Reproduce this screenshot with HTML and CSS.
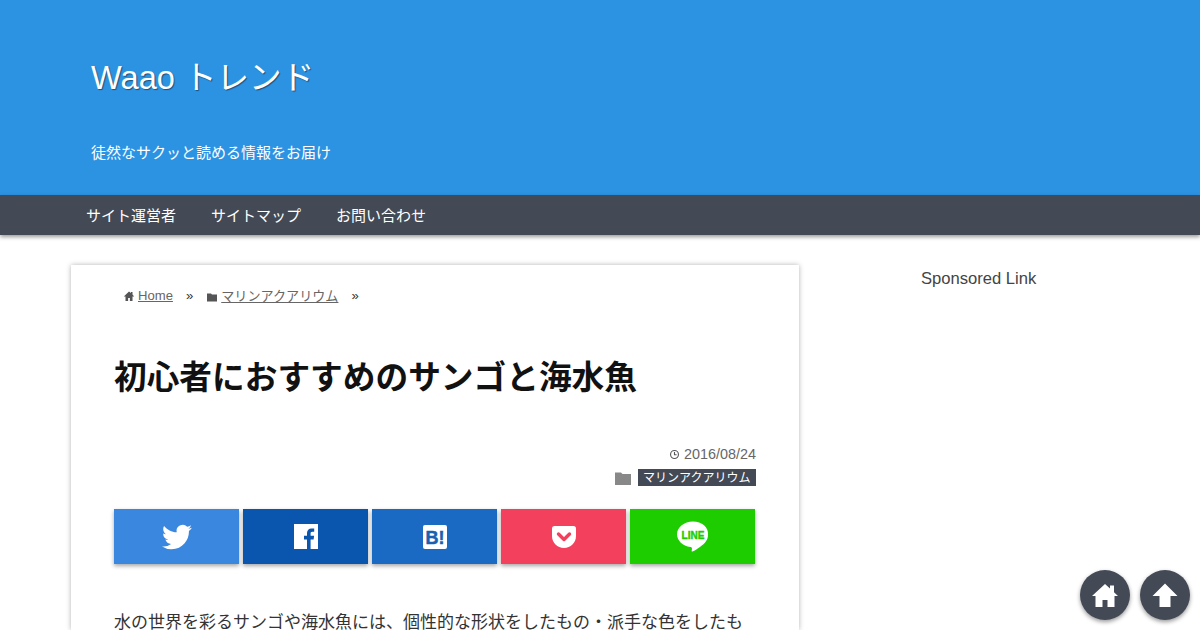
FILE: index.html
```html
<!DOCTYPE html>
<html lang="ja">
<head>
  <meta charset="UTF-8">
  <meta name="viewport" content="width=device-width, initial-scale=1.0">
  <title>初心者におすすめのサンゴと海水魚</title>
  <link rel="stylesheet" href="styles.css">
</head>
<body>
  <header class="site-header">
    <div class="site-title">Waao トレンド</div>
    <div class="site-desc">徒然なサクッと読める情報をお届け</div>
  </header>

  <nav class="nav-bar">
    <a href="#">サイト運営者</a>
    <a href="#">サイトマップ</a>
    <a href="#">お問い合わせ</a>
  </nav>

  <div class="body-wrap">
    <main class="post-card">
      <div class="crumbs">
        <a href="#"><svg class="crumb-icon" viewBox="0 0 12 12"><path d="M6 1.500 .8 6.400h1.700V11h2.600V8h1.800v3h2.600V6.400h1.700L9.500 4.500V2H8v1.100z"/></svg>Home</a>
        <span class="crumb-sep">»</span>
        <a href="#"><svg class="crumb-icon" viewBox="0 0 12 12"><path d="M1 2.500h4l1 1h5v7H1z"/></svg>マリンアクアリウム</a>
        <span class="crumb-sep">»</span>
      </div>

      <h1 class="post-title">初心者におすすめのサンゴと海水魚</h1>

      <div class="post-meta">
        <div class="post-date"><svg class="clock-icon" viewBox="0 0 12 12"><circle cx="6" cy="6" r="4.300"/><path d="M6 3.300v3h2.300"/></svg>2016/08/24</div>
        <div class="post-cat">
          <svg class="cat-icon" viewBox="0 0 16 14"><path d="M0 1.500h6L7.500 3H16v11H0z"/></svg>
          <a class="cat-tag" href="#">マリンアクアリウム</a>
        </div>
      </div>

      <div class="share-row">
        <a class="share-btn twitter" href="#">
          <svg viewBox="0 0 24 24" width="30" height="30"><path fill="#fff" d="M23.950 4.570a10 10 0 0 1-2.820.77 4.960 4.960 0 0 0 2.160-2.720c-.95.550-2 .96-3.130 1.190a4.920 4.920 0 0 0-8.380 4.480C7.690 8.100 4.070 6.130 1.640 3.160a4.820 4.820 0 0 0-.67 2.480c0 1.710.87 3.210 2.190 4.100a4.900 4.900 0 0 1-2.230-.62v.06a4.920 4.920 0 0 0 3.950 4.830 5 5 0 0 1-2.210.08 4.940 4.940 0 0 0 4.600 3.420A9.870 9.870 0 0 1 0 19.540a13.940 13.940 0 0 0 7.550 2.210c9.050 0 14-7.500 14-13.980 0-.21 0-.42-.02-.63a9.940 9.940 0 0 0 2.420-2.570z"/></svg>
        </a>
        <a class="share-btn facebook" href="#">
          <svg viewBox="0 0 24 25" width="24" height="25"><path fill="#fff" d="M0 0h24v25H0z"/><path fill="#0a55ad" d="M16.600 25v-9.500h3l.5-3.700h-3.500V9.600c0-1.100.3-1.800 1.800-1.800h1.800V4.500c-.4 0-1.400-.1-2.700-.1-2.700 0-4.500 1.600-4.500 4.700v2.700h-3v3.700h3V25z"/></svg>
        </a>
        <a class="share-btn hatena" href="#">
          <svg viewBox="0 0 24 24" width="24" height="24"><rect width="24" height="24" rx="2" fill="#fff"/><text x="2.500" y="18.500" class="hatena-mark">B!</text></svg>
        </a>
        <a class="share-btn pocket" href="#">
          <svg viewBox="0 0 24 22" width="24" height="22"><path fill="#fff" d="M2.500 0h19A2.500 2.500 0 0 1 24 2.500V10c0 6.600-5.400 12-12 12S0 16.600 0 10V2.500A2.500 2.500 0 0 1 2.500 0z"/><path fill="none" stroke="#f3405c" stroke-width="3.400" stroke-linecap="round" stroke-linejoin="round" d="m6.500 8 5.500 5.500L17.500 8"/></svg>
        </a>
        <a class="share-btn line" href="#">
          <svg viewBox="0 0 32 32" width="32" height="32"><path fill="#fff" d="M16 .5C7.200.5 0 6.200 0 13.300c0 6.400 5.700 11.700 13.400 12.700.5.100 1.200.3 1.400.8.200.4.100 1 .1 1.400l-.2 1.300c-.1.400-.3 1.500 1.300.8 1.700-.7 8.900-5.200 12.100-8.900 2.200-2.400 2.900-4.900 2.900-7.600C31.800 6.200 24.800.5 16 .5z"/><text x="16" y="17.500" class="line-mark">LINE</text></svg>
        </a>
      </div>

      <p class="post-text">水の世界を彩るサンゴや海水魚には、個性的な形状をしたもの・派手な色をしたも</p>
    </main>

    <aside class="side-col">
      <div class="side-title">Sponsored Link</div>
    </aside>
  </div>

  <div class="float-btns">
    <a class="float-btn" href="#">
      <svg viewBox="0 0 26 24" width="26" height="24"><path fill="#fff" d="M13 1 0 13h3.500v11h7v-7h5v7h7V13H26l-4-3.700V2.500h-4v3.100z"/></svg>
    </a>
    <a class="float-btn" href="#">
      <svg viewBox="0 0 26 24" width="26" height="24"><path fill="#fff" d="M13 .5 .5 13h7v11h11V13h7z"/></svg>
    </a>
  </div>
</body>
</html>
```

FILE: styles.css
```css
html, body {
  height: 630px;
  overflow: hidden;
}

body {
  margin: 0;
  background-color: #fff;
  color: #333;
  font-family: "Liberation Sans", "Noto Sans CJK JP", sans-serif;
}

a {
  color: inherit;
}

/* header */
.site-header {
  height: 195px;
  box-sizing: border-box;
  padding: 58px 0 0 91px;
  background-color: #2c93e3;
  color: #fff;
}

.site-title {
  font-size: 32.6px;
  line-height: 40px;
  text-shadow: 1px 1px 1px rgba(0, 0, 0, 0.45);
}

.site-desc {
  margin-top: 45px;
  font-size: 15px;
  line-height: 20px;
}

/* nav */
.nav-bar {
  position: relative;
  display: flex;
  gap: 35px;
  height: 40px;
  padding-left: 86px;
  background-color: #434955;
  box-shadow: 0 2px 4px rgba(0, 0, 0, 0.4);
}

.nav-bar a {
  color: #fff;
  font-size: 15px;
  line-height: 41px;
  text-decoration: none;
}

/* main layout */
.body-wrap {
  display: flex;
  padding: 30px 0 0 71px;
}

.post-card {
  width: 728px;
  height: 365px;
  box-sizing: border-box;
  padding: 0 43px;
  box-shadow: 0 0 5px rgba(0, 0, 0, 0.3);
}

.crumbs {
  display: flex;
  align-items: center;
  height: 20px;
  margin: 20px 0 0 9px;
  color: #333;
  font-size: 13.1px;
}

.crumbs a {
  color: #666;
}

.crumb-icon {
  width: 12px;
  height: 12px;
  margin-right: 3px;
  vertical-align: -2px;
  fill: #555;
}

.crumb-sep {
  margin: 0 13px;
}

.post-title {
  margin: 49px 0 0;
  color: #111;
  font-size: 32.7px;
  line-height: 48px;
}

.post-meta {
  margin-top: 42px;
  color: #666;
  font-size: 14.4px;
  text-align: right;
}

.post-date {
  line-height: 20px;
}

.clock-icon {
  width: 11px;
  height: 11px;
  margin-right: 4px;
  vertical-align: -1px;
  fill: none;
  stroke: #555;
  stroke-width: 1.2;
}

.post-cat {
  display: flex;
  align-items: center;
  justify-content: flex-end;
  margin-top: 5px;
}

.cat-icon {
  width: 16px;
  height: 14px;
  margin-right: 7px;
  fill: #888;
}

.cat-tag {
  padding: 1px 5.5px 0;
  background-color: #434955;
  color: #fff;
  font-size: 12px;
  line-height: 16px;
  text-decoration: none;
}

/* share buttons */
.share-row {
  display: flex;
  gap: 4px;
  margin-top: 23px;
}

.share-btn {
  display: flex;
  align-items: center;
  justify-content: center;
  width: 125px;
  height: 55px;
  box-shadow: 0 2px 4px rgba(0, 0, 0, 0.35);
}

.twitter { background-color: #3a87e0; }
.facebook { background-color: #0a55ad; }
.hatena { background-color: #1a6ac4; }
.pocket { background-color: #f3405c; }
.line { background-color: #1dcd00; }

.hatena-mark {
  fill: #1a5fb0;
  stroke: #1a5fb0;
  stroke-width: 0.5;
  font-size: 18px;
  font-weight: bold;
}

.line-mark {
  fill: #1dcd00;
  stroke: #1dcd00;
  stroke-width: 0.4;
  font-size: 10px;
  font-weight: bold;
  text-anchor: middle;
}

.post-text {
  margin: 45px 0 0;
  font-size: 17px;
  line-height: 28px;
  white-space: nowrap;
}

/* sidebar */
.side-col {
  margin-left: 122px;
}

.side-title {
  margin-top: 3px;
  color: #444;
  font-size: 16.6px;
  line-height: 22px;
}

/* floating buttons, they stay over the page */
.float-btns {
  position: fixed;
  right: 10px;
  bottom: 10px;
  display: flex;
  gap: 10px;
}

.float-btn {
  display: flex;
  align-items: center;
  justify-content: center;
  width: 50px;
  height: 50px;
  border-radius: 50%;
  background-color: #434955;
  box-shadow: 0 2px 4px rgba(0, 0, 0, 0.4);
}
```
